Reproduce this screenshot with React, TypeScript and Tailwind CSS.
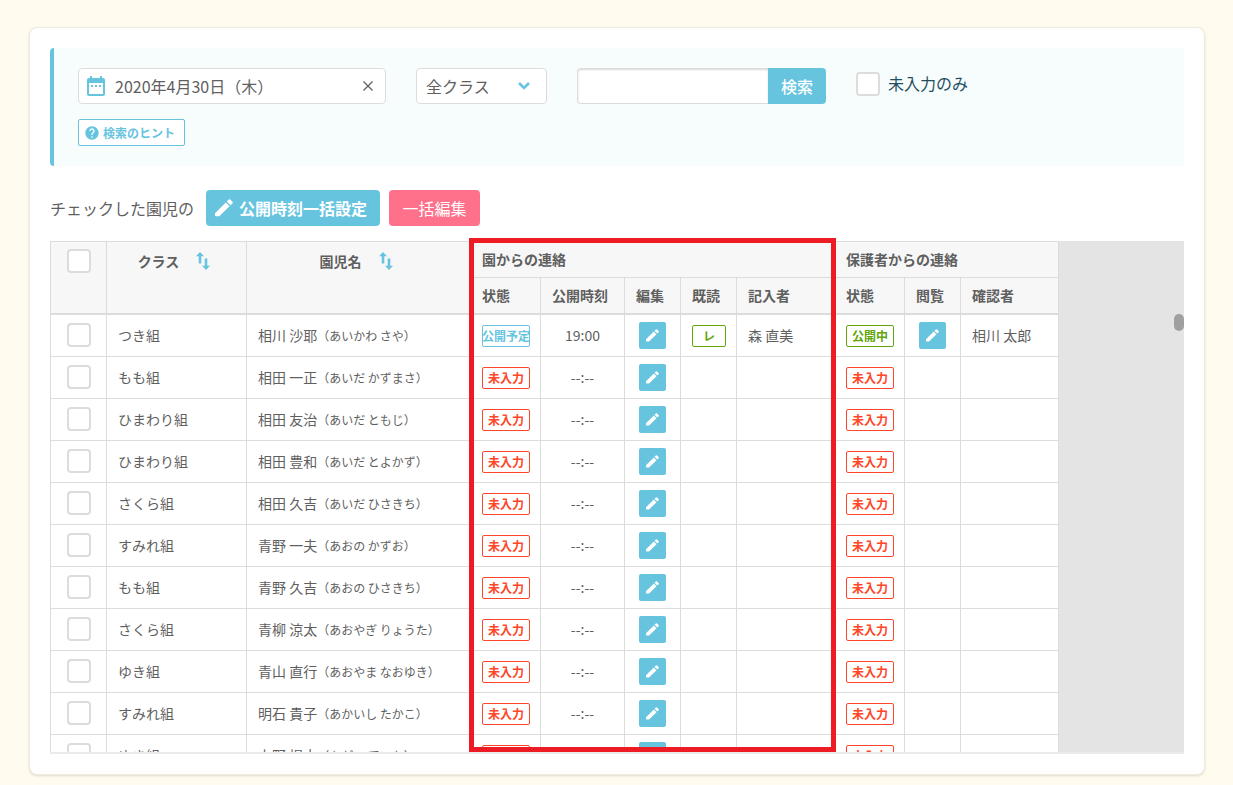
import React, { useState } from 'react';
import { MdDateRange, MdHelp } from 'react-icons/md';

type Child = {
  group: string;
  name: string;
  kana: string;
  status: string;
  time?: string;
  read?: boolean;
  writer?: string;
  parentStatus: string;
  checker?: string;
};

const children: Child[] = [
  {
    group: 'つき組',
    name: '相川 沙耶',
    kana: 'あいかわ さや',
    status: '公開予定',
    time: '19:00',
    read: true,
    writer: '森 直美',
    parentStatus: '公開中',
    checker: '相川 太郎',
  },
  { group: 'もも組', name: '相田 一正', kana: 'あいだ かずまさ', status: '未入力', parentStatus: '未入力' },
  { group: 'ひまわり組', name: '相田 友治', kana: 'あいだ ともじ', status: '未入力', parentStatus: '未入力' },
  { group: 'ひまわり組', name: '相田 豊和', kana: 'あいだ とよかず', status: '未入力', parentStatus: '未入力' },
  { group: 'さくら組', name: '相田 久吉', kana: 'あいだ ひさきち', status: '未入力', parentStatus: '未入力' },
  { group: 'すみれ組', name: '青野 一夫', kana: 'あおの かずお', status: '未入力', parentStatus: '未入力' },
  { group: 'もも組', name: '青野 久吉', kana: 'あおの ひさきち', status: '未入力', parentStatus: '未入力' },
  { group: 'さくら組', name: '青柳 涼太', kana: 'あおやぎ りょうた', status: '未入力', parentStatus: '未入力' },
  { group: 'ゆき組', name: '青山 直行', kana: 'あおやま なおゆき', status: '未入力', parentStatus: '未入力' },
  { group: 'すみれ組', name: '明石 貴子', kana: 'あかいし たかこ', status: '未入力', parentStatus: '未入力' },
  { group: 'ゆき組', name: '上野 提太', kana: 'あがの ていた', status: '未入力', parentStatus: '未入力' },
];

const statusColors: Record<string, string> = {
  公開予定: 'border-[#67c4df] text-[#67c4df]',
  公開中: 'border-[#62a60a] text-[#62a60a]',
  未入力: 'border-[#ff4628] text-[#ff4628]',
};

const checkboxClass =
  'block size-6 shrink-0 appearance-none rounded border-2 border-[#dcdcdc] bg-white checked:bg-[#67c4df]';
const headClass = 'border-r border-[#dcdcdc] bg-[#f7f7f7] px-[11px] text-left font-bold';
const cellClass = 'h-[42px] border-r border-b border-[#dcdcdc] bg-white px-[11px] pb-[2px]';
const boxCellClass = 'h-[42px] border-r border-b border-[#dcdcdc] bg-white px-[11px]';

const Pencil = ({ className }: { className: string }) => (
  <svg viewBox="0 0 18 18" className={className} fill="currentColor">
    <path d="M0.8 17.2Q0 17.2 0 16.4V14.2L10.8 3.4L14.6 7.2L4.2 17.2Z" />
    <path d="M11.8 2.4L13.6 0.6Q14.4 -0.2 15.2 0.6L17.4 2.8Q18.2 3.6 17.4 4.4L15.6 6.2Z" />
  </svg>
);

const Status = ({ label }: { label: string }) => (
  <span
    className={`flex h-[22px] w-12 items-center justify-center rounded-xs border pt-px text-xs font-bold whitespace-nowrap ${statusColors[label]}`}
  >
    {label}
  </span>
);

const EditButton = ({ label }: { label: string }) => (
  <button
    type="button"
    aria-label={label}
    className="mx-auto flex size-[27px] items-center justify-center rounded-xs bg-[#67c4df] text-white"
  >
    <Pencil className="size-[13px]" />
  </button>
);

const SortButton = ({ label }: { label: string }) => (
  <button type="button" aria-label={label} className="text-[#67c4df]">
    <svg viewBox="0 0 14 18" className="h-[18px] w-[14px]" fill="currentColor">
      <path d="M4 0L8 4.2H5.3V11.5H2.7V4.2H0Z" />
      <path d="M10 18L6 13.8H8.7V6.5H11.3V13.8H14Z" />
    </svg>
  </button>
);

const SearchPanel = () => {
  const [date, setDate] = useState('2020年4月30日（木）');

  return (
    <form
      className="rounded-l border-l-4 border-[#67c4df] bg-[#f7fdfd] px-6 py-5"
      onSubmit={(e) => e.preventDefault()}
    >
      <div className="flex items-start">
        <div className="flex h-9 w-[308px] items-center rounded border border-[#dcdcdc] bg-white pr-3 pl-[5px]">
          <MdDateRange className="size-6 shrink-0 text-[#67c4df]" />
          <input
            type="text"
            aria-label="日付"
            value={date}
            onChange={(e) => setDate(e.target.value)}
            className="ml-[7px] min-w-0 flex-1 outline-none"
          />
          <button type="button" aria-label="日付をクリア" onClick={() => setDate('')}>
            <svg viewBox="0 0 10 10" className="size-[10px]" stroke="currentColor" strokeWidth="1.3">
              <path d="M0.5 0.5L9.5 9.5M9.5 0.5L0.5 9.5" />
            </svg>
          </button>
        </div>

        <div className="relative ml-[30px]">
          <select
            aria-label="クラス"
            className="h-9 w-[131px] appearance-none rounded border border-[#dcdcdc] bg-white pl-[9px]"
          >
            <option>全クラス</option>
            <option>つき組</option>
            <option>もも組</option>
            <option>ひまわり組</option>
            <option>さくら組</option>
            <option>すみれ組</option>
            <option>ゆき組</option>
          </select>
          <svg
            viewBox="0 0 12 8"
            className="pointer-events-none absolute top-[14px] right-[17px] h-2 w-3 text-[#67c4df]"
            fill="none"
            stroke="currentColor"
            strokeWidth="2.6"
          >
            <path d="M1 1L6 6L11 1" />
          </svg>
        </div>

        <div className="ml-[30px] flex">
          <input
            type="text"
            aria-label="検索キーワード"
            className="h-9 w-[191px] rounded-l border border-r-0 border-[#dcdcdc] bg-white px-2 shadow-[inset_0_1px_2px_rgba(0,0,0,0.15)] outline-none"
          />
          <button type="submit" className="h-9 w-[58px] rounded-r bg-[#67c4df] font-medium text-white">
            検索
          </button>
        </div>

        <label className="mt-1 ml-[30px] flex items-center gap-2 leading-[22px] text-[#1f5062]">
          <input type="checkbox" className={checkboxClass} />
          <span className="pb-[2px]">未入力のみ</span>
        </label>
      </div>

      <button
        type="button"
        className="mt-[15px] flex h-[27px] w-[107px] items-center gap-[3px] rounded-xs border border-[#67c4df] bg-white pl-[5px] text-xs font-bold text-[#67c4df]"
      >
        <MdHelp className="size-4" />
        <span className="pt-px">検索のヒント</span>
      </button>
    </form>
  );
};

const ContactTable = () => (
  <div className="relative mt-[15px]">
    <div className="h-[513px] overflow-hidden border-b-2 border-[#ebebeb] bg-[#e4e4e4]">
      <table className="w-[1009px] table-fixed border-separate border-spacing-0 border-t border-l border-[#dcdcdc] text-sm">
        <colgroup>
          <col className="w-14" />
          <col className="w-[140px]" />
          <col className="w-56" />
          <col className="w-[70px]" />
          <col className="w-[84px]" />
          <col className="w-14" />
          <col className="w-14" />
          <col className="w-[98px]" />
          <col className="w-[70px]" />
          <col className="w-14" />
          <col className="w-[98px]" />
        </colgroup>
        <thead>
          <tr>
            <th rowSpan={2} className="border-r border-b-2 border-[#dcdcdc] bg-[#f7f7f7] pt-[7px] align-top">
              <input type="checkbox" aria-label="すべて選択" className={`${checkboxClass} mx-auto`} />
            </th>
            <th rowSpan={2} className={`${headClass} border-b-2 pt-[9px] align-top`}>
              <div className="flex items-center justify-center gap-[17px] pr-[5px]">
                クラス
                <SortButton label="クラスで並べ替え" />
              </div>
            </th>
            <th rowSpan={2} className={`${headClass} border-b-2 pt-[9px] align-top`}>
              <div className="flex items-center justify-center gap-[17px] pr-[5px]">
                園児名
                <SortButton label="園児名で並べ替え" />
              </div>
            </th>
            <th colSpan={5} className={`${headClass} h-9 border-b pb-[2px]`}>園からの連絡</th>
            <th colSpan={3} className={`${headClass} h-9 border-b pb-[2px]`}>保護者からの連絡</th>
          </tr>
          <tr>
            <th className={`${headClass} h-[37px] border-b-2 pb-[2px]`}>状態</th>
            <th className={`${headClass} border-b-2 pb-[2px]`}>公開時刻</th>
            <th className={`${headClass} border-b-2 pb-[2px]`}>編集</th>
            <th className={`${headClass} border-b-2 pb-[2px]`}>既読</th>
            <th className={`${headClass} border-b-2 pb-[2px]`}>記入者</th>
            <th className={`${headClass} border-b-2 pb-[2px]`}>状態</th>
            <th className={`${headClass} border-b-2 pb-[2px]`}>閲覧</th>
            <th className={`${headClass} border-b-2 pb-[2px]`}>確認者</th>
          </tr>
        </thead>
        <tbody>
          {children.map((child) => (
            <tr key={child.name}>
              <td className={cellClass}>
                <input type="checkbox" aria-label={child.name} className={`${checkboxClass} mx-auto`} />
              </td>
              <td className={cellClass}>{child.group}</td>
              <td className={`${cellClass} whitespace-nowrap`}>
                {child.name}
                <span className="text-xs">（{child.kana}）</span>
              </td>
              <td className={boxCellClass}>
                <Status label={child.status} />
              </td>
              <td className={`${cellClass} text-center`}>{child.time ?? '--:--'}</td>
              <td className={boxCellClass}>
                <EditButton label={`${child.name}の連絡を編集`} />
              </td>
              <td className={boxCellClass}>
                {child.read && (
                  <span className="flex h-[22px] w-[34px] items-center justify-center rounded-xs border border-[#62a60a] text-xs font-bold text-[#62a60a]">
                    レ
                  </span>
                )}
              </td>
              <td className={cellClass}>{child.writer}</td>
              <td className={boxCellClass}>
                <Status label={child.parentStatus} />
              </td>
              <td className={boxCellClass}>
                {child.checker && <EditButton label={`${child.name}の連絡を閲覧`} />}
              </td>
              <td className={cellClass}>{child.checker}</td>
            </tr>
          ))}
        </tbody>
      </table>
    </div>
    {/* scrollbar thumb */}
    <div className="absolute top-[73px] right-0 h-[17px] w-[10px] rounded-full bg-[#a0a0a0]" />
    {/* highlighted column group */}
    <div className="pointer-events-none absolute -top-[3px] left-[419px] h-[514px] w-[367px] border-5 border-[#ed1c24]" />
  </div>
);

const App = () => (
  <div className="min-h-screen bg-[#fffbee] pt-[27px] pr-7 pb-[10px] pl-[29px] font-['Noto_Sans_CJK_JP',sans-serif] text-base text-[#5f5f5f]">
    <main className="rounded-lg border border-[#efebdf] bg-white p-5 shadow-sm">
      <SearchPanel />
      <div className="mt-6 flex items-center">
        <span>チェックした園児の</span>
        <button
          type="button"
          className="ml-3 flex h-9 w-[174px] items-center gap-[6px] rounded bg-[#67c4df] pl-[9px] font-bold text-white"
        >
          <Pencil className="size-[18px]" />
          公開時刻一括設定
        </button>
        <button type="button" className="ml-[9px] h-9 w-[91px] rounded bg-[#ff708a] text-white">
          一括編集
        </button>
      </div>
      <ContactTable />
    </main>
  </div>
);

export default App;
